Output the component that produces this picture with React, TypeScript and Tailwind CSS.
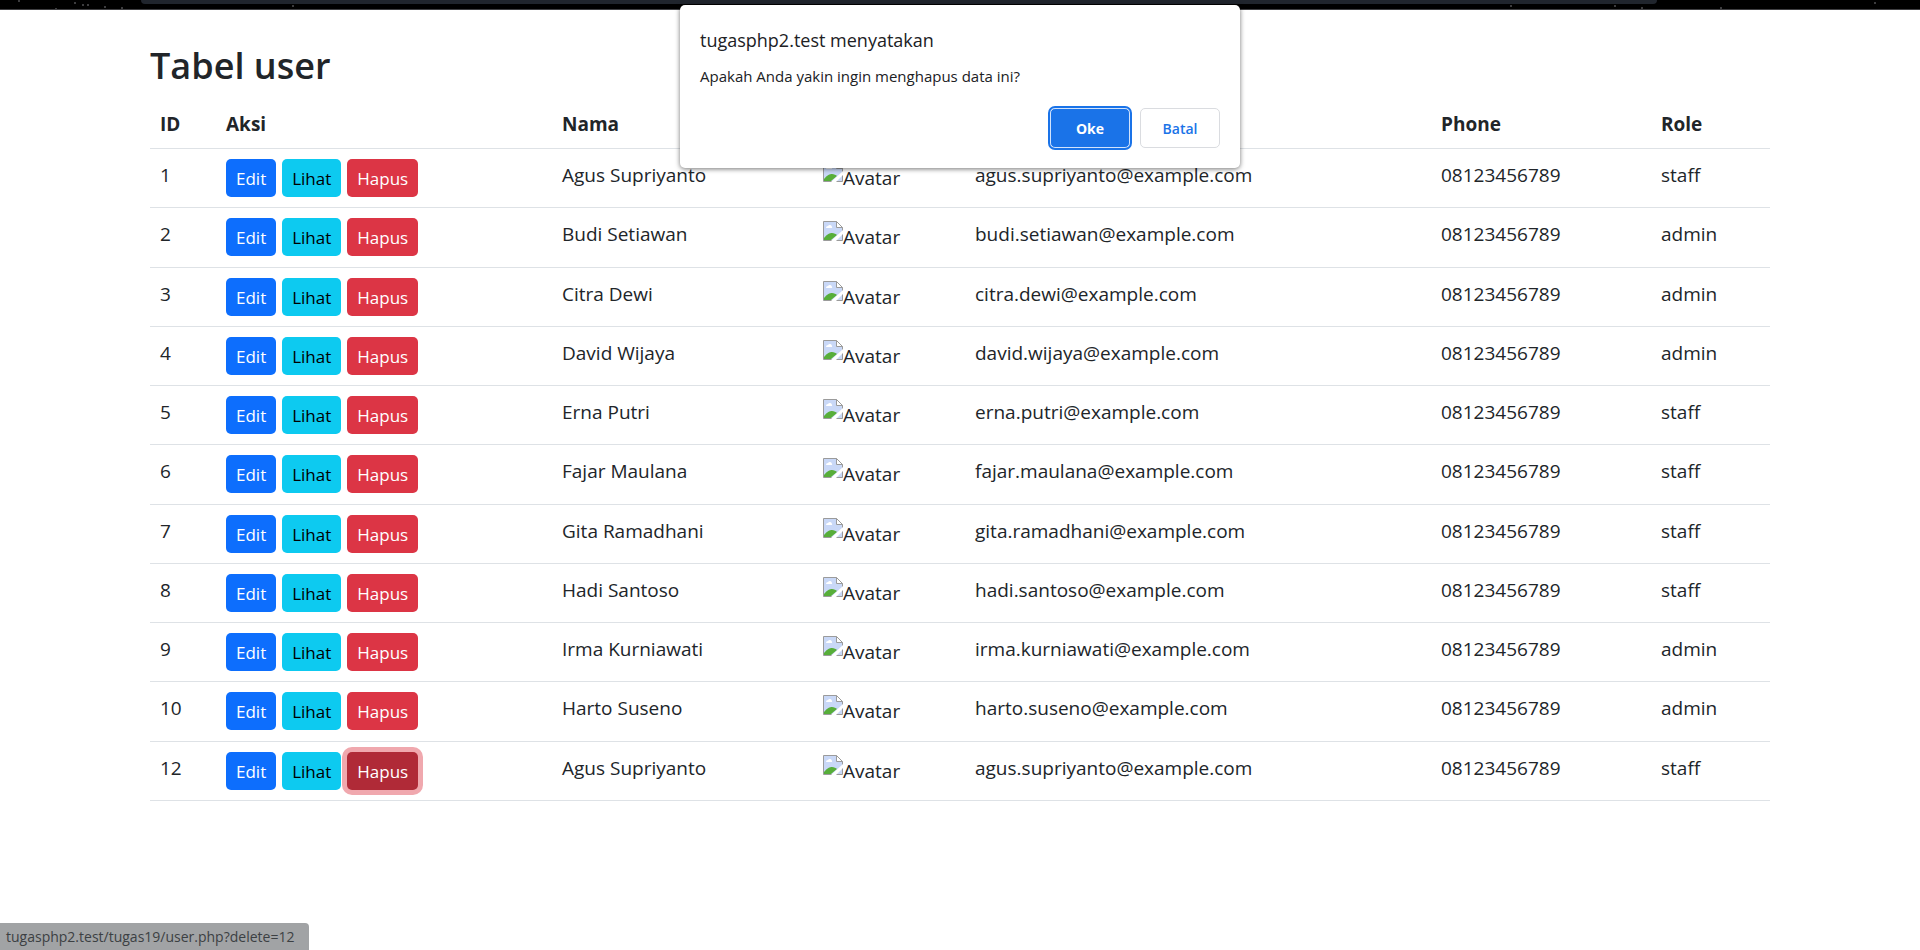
import type { ReactNode } from "react";

type User = { id: number; name: string; email: string; role: string };

const users: User[] = [
  { id: 1, name: "Agus Supriyanto", email: "agus.supriyanto@example.com", role: "staff" },
  { id: 2, name: "Budi Setiawan", email: "budi.setiawan@example.com", role: "admin" },
  { id: 3, name: "Citra Dewi", email: "citra.dewi@example.com", role: "admin" },
  { id: 4, name: "David Wijaya", email: "david.wijaya@example.com", role: "admin" },
  { id: 5, name: "Erna Putri", email: "erna.putri@example.com", role: "staff" },
  { id: 6, name: "Fajar Maulana", email: "fajar.maulana@example.com", role: "staff" },
  { id: 7, name: "Gita Ramadhani", email: "gita.ramadhani@example.com", role: "staff" },
  { id: 8, name: "Hadi Santoso", email: "hadi.santoso@example.com", role: "staff" },
  { id: 9, name: "Irma Kurniawati", email: "irma.kurniawati@example.com", role: "admin" },
  { id: 10, name: "Harto Suseno", email: "harto.suseno@example.com", role: "admin" },
  { id: 12, name: "Agus Supriyanto", email: "agus.supriyanto@example.com", role: "staff" },
];

const PHONE = "08123456789";
const PENDING_ID = 12;

function ActionLink({ href, tone, children }: { href: string; tone: string; children: ReactNode }) {
  return (
    <a href={href} className={`rounded-[5px] px-[10px] pt-[7px] pb-[6px] leading-[25px] text-[17px] ${tone}`}>
      {children}
    </a>
  );
}

function BrokenImage() {
  return (
    <svg width="20" height="20" viewBox="0 0 20 20" className="shrink-0" aria-hidden="true">
      <path d="M.5.5h13l6 6v13H.5z" fill="#c9d8f7" stroke="#9b9b9b" />
      <path d="M13.5.5v6h6z" fill="#fff" stroke="#9b9b9b" />
      <path d="M3 7a2 2 0 0 1 2-2 2.200 2.200 0 0 1 4 1 1 1 0 0 1 0 1z" fill="#fff" />
      <path d="M1 19v-2c3-4 6-5 8-5s4 1 5 2l-6 5z" fill="#57ae3a" />
      <path d="M20 9v4l-7 7H8z" fill="#fff" />
    </svg>
  );
}

const stars = [
  [18, 0], [74, 2], [82, 4], [87, 4], [104, 6], [121, 7], [55, 8], [292, 5], [1510, 5], [1614, 5], [1641, 7], [1720, 7], [1874, 2],
];

function BrowserEdge() {
  return (
    <div className="relative h-[10px] border-b border-[#3f3f42] bg-black pr-[263px] pl-[141px]">
      <svg className="absolute inset-0 h-[9px] w-full" aria-hidden="true">
        {stars.map(([x, y]) => (
          <rect key={x} x={x} y={y} width="2" height="2" fill="#3c3c3e" />
        ))}
      </svg>
      <div className="relative h-1 rounded-b-[12px] bg-[#20252d]" />
    </div>
  );
}

function ConfirmDialog() {
  return (
    <div
      role="dialog"
      aria-labelledby="confirm-title"
      className="absolute top-[5px] left-1/2 w-[560px] -translate-x-1/2 rounded-[5px] bg-white p-5 text-[#202124] shadow-[0_1px_5px_rgba(0,0,0,0.55)]"
    >
      <h2 id="confirm-title" className="text-[18px] leading-[30px]">tugasphp2.test menyatakan</h2>
      <p className="mt-2 text-[15px] leading-[26px]">Apakah Anda yakin ingin menghapus data ini?</p>
      <div className="mt-[19px] flex justify-end gap-[10px]">
        <button type="button" className="h-10 w-20 rounded-[5px] border border-[#d2e3fc] bg-[#1a73e8] text-[14px] font-bold text-white outline-2 outline-[#1a73e8]">
          Oke
        </button>
        <button type="button" className="h-10 w-20 rounded-[5px] border border-[#dadce0] bg-white text-[14px] font-semibold text-[#1a73e8]">
          Batal
        </button>
      </div>
    </div>
  );
}

export default function App() {
  return (
    <div className="relative flex min-h-screen flex-col bg-white font-['Open_Sans','Noto_Sans',sans-serif] text-[#212529]">
      <BrowserEdge />
      <main className="mx-auto w-full max-w-[1650px] grow px-[15px] pt-8">
        <h1 className="text-[36px] leading-[48px] font-semibold">Tabel user</h1>
        <table className="mt-[9px] w-full table-fixed border-separate border-spacing-0 text-left text-[19px] leading-[32px]">
          <colgroup>
            <col className="w-[66px]" />
            <col className="w-[336px]" />
            <col className="w-[261px]" />
            <col className="w-[152px]" />
            <col className="w-[466px]" />
            <col className="w-[220px]" />
            <col />
          </colgroup>
          <thead>
            <tr className="h-[50px]">
              {["ID", "Aksi", "Nama", "Avatar", "Email", "Phone", "Role"].map((label) => (
                <th key={label} scope="col" className="border-b border-[#dee2e6] px-[10px] font-bold">{label}</th>
              ))}
            </tr>
          </thead>
          <tbody>
            {users.map((user) => (
              <tr key={user.id} className="h-[59px] align-top nth-[4n+2]:h-[60px] [&>td]:border-b [&>td]:border-[#dee2e6] [&>td]:px-[10px] [&>td]:pt-[10px]">
                <td>{user.id}</td>
                <td>
                  <div className="flex gap-[6px]">
                    <ActionLink href="#edit" tone="bg-[#0d6efd] text-white">Edit</ActionLink>
                    <ActionLink href="#lihat" tone="bg-[#0dcaf0] text-black">Lihat</ActionLink>
                    <ActionLink
                      href="#hapus"
                      tone={user.id === PENDING_ID ? "bg-[#b02a37] text-white ring-5 ring-[#f0a8ae]" : "bg-[#dc3545] text-white"}
                    >
                      Hapus
                    </ActionLink>
                  </div>
                </td>
                <td>{user.name}</td>
                <td>
                  <div className="flex pt-[3px]">
                    <BrokenImage />
                    <span>Avatar</span>
                  </div>
                </td>
                <td>{user.email}</td>
                <td>{PHONE}</td>
                <td>{user.role}</td>
              </tr>
            ))}
          </tbody>
        </table>
      </main>
      <footer className="flex">
        <div className="rounded-tr-[4px] bg-[#a1a3a5] pr-[15px] pl-[6px] text-[14px] leading-[27px] text-[#3c4043]">
          tugasphp2.test/tugas19/user.php?delete=12
        </div>
      </footer>
      <ConfirmDialog />
    </div>
  );
}
